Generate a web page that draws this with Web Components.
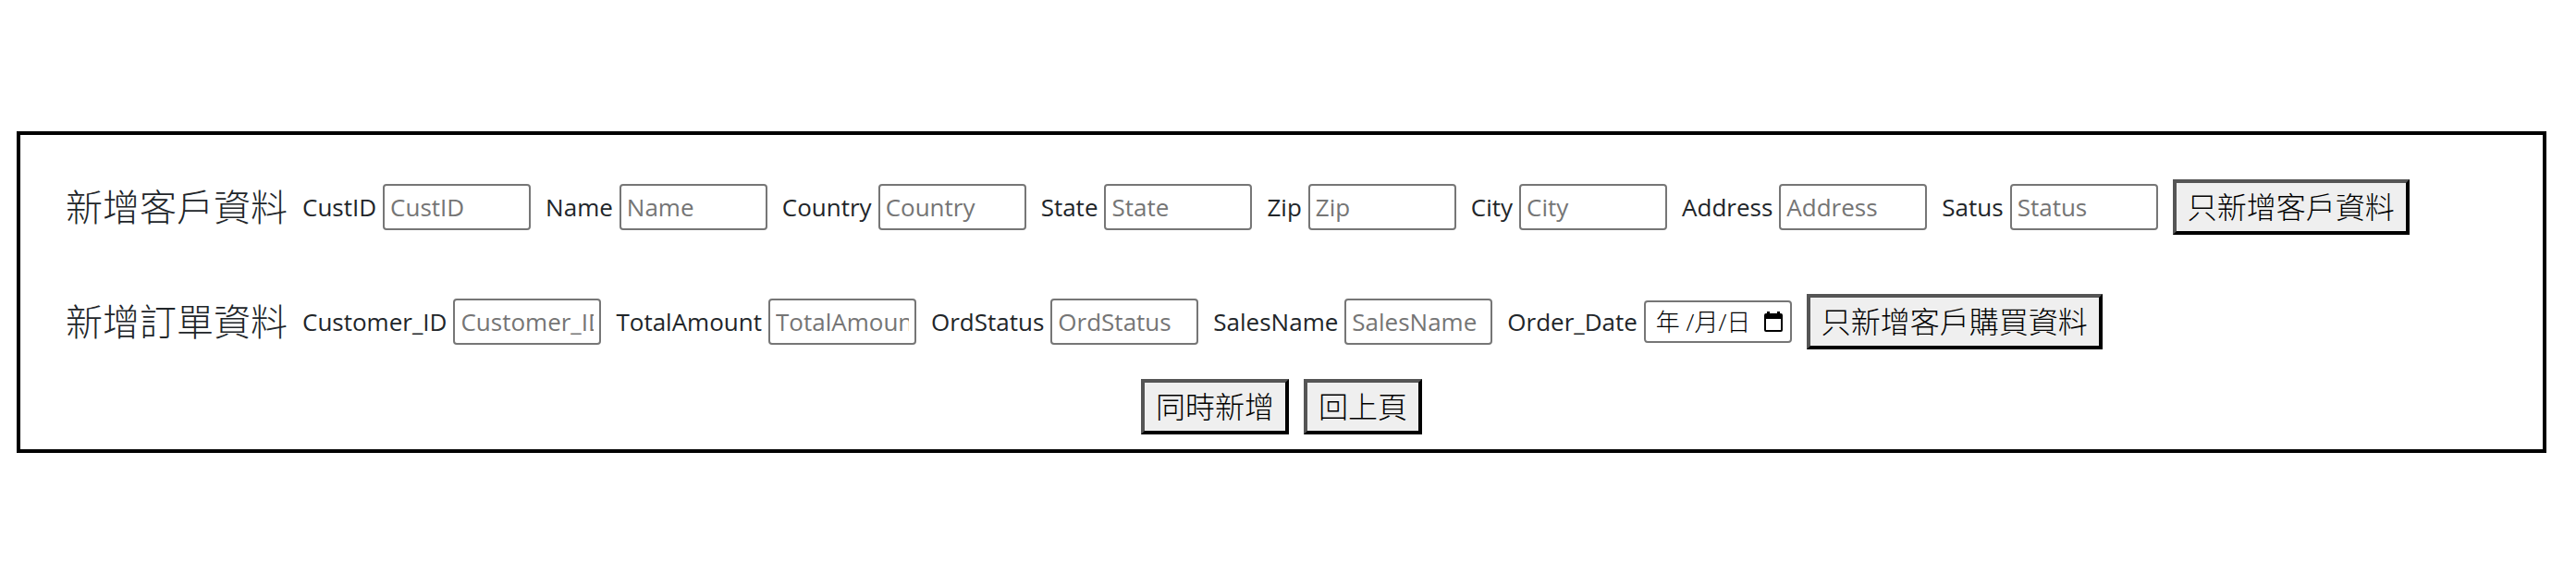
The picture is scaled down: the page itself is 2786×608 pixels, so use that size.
<!DOCTYPE html>
<html lang="zh-Hant">
<head>
<meta charset="utf-8">
<meta name="viewport" content="width=device-width, initial-scale=1">
<title>新增資料</title>
<style>
  body {
    margin: 142px 32px 64px 18px;
    background: #fff;
    color: #212529;
    font: 26px/40px "Open Sans", "Noto Sans CJK TC", sans-serif;
  }
</style>
</head>
<body>
<entry-panel>
  <form-row heading="新增客戶資料">
    <text-field label="CustID"></text-field>
    <text-field label="Name"></text-field>
    <text-field label="Country"></text-field>
    <text-field label="State"></text-field>
    <text-field label="Zip"></text-field>
    <text-field label="City"></text-field>
    <text-field label="Address"></text-field>
    <text-field label="Satus" hint="Status"></text-field>
    <action-button>只新增客戶資料</action-button>
  </form-row>
  <form-row heading="新增訂單資料">
    <text-field label="Customer_ID"></text-field>
    <text-field label="TotalAmount"></text-field>
    <text-field label="OrdStatus"></text-field>
    <text-field label="SalesName"></text-field>
    <date-field label="Order_Date"></date-field>
    <action-button>只新增客戶購買資料</action-button>
  </form-row>
  <action-button slot="actions">同時新增</action-button>
  <action-button slot="actions">回上頁</action-button>
</entry-panel>

<script>
  const define = (name, render, setup) => {
    customElements.define(name, class extends HTMLElement {
      constructor() {
        super();
        this.attachShadow({ mode: "open" });
      }
      connectedCallback() {
        this.shadowRoot.innerHTML = render(this);
        if (setup) setup(this);
      }
    });
  };

  const fieldStyle = `
    :host { display: flex; align-items: center; gap: 7px; }
    label { white-space: nowrap; }
    input {
      box-sizing: border-box;
      width: 160px;
      height: 50px;
      margin: 0;
      padding: 2px 6px;
      border: 2px solid #767676;
      border-radius: 4px;
      background: #fff;
      color: #000;
      font: inherit;
    }
    input::placeholder { color: #757575; }
  `;

  define("entry-panel", () => `
    <style>
      :host { display: block; border: 4px solid #000; padding: 48px 0 16px; }
      form { display: flex; flex-direction: column; gap: 32px; }
      .rows { display: flex; flex-direction: column; gap: 64px; padding: 0 16px 0 49px; }
      .actions { display: flex; flex-wrap: wrap; justify-content: center; gap: 16px; }
    </style>
    <form>
      <div class="rows"><slot></slot></div>
      <div class="actions"><slot name="actions"></slot></div>
    </form>`);

  define("form-row", el => `
    <style>
      :host { display: flex; flex-wrap: wrap; align-items: center; gap: 16px; }
      h2 { margin: 0; font-size: 40px; line-height: 48px; font-weight: 300; white-space: nowrap; }
    </style>
    <h2>${el.getAttribute("heading")}</h2>
    <slot></slot>`);

  define("text-field", el => {
    const label = el.getAttribute("label");
    return `
    <style>${fieldStyle}</style>
    <label for="field">${label}</label>
    <input id="field" type="text" placeholder="${el.getAttribute("hint") || label}">`;
  });

  define("date-field", el => `
    <style>
      ${fieldStyle}
      .box { display: grid; align-items: center; }
      .box > * { grid-area: 1 / 1; }
      input { height: 46px; }
      input::-webkit-datetime-edit { opacity: 0; }
      input::-webkit-calendar-picker-indicator { opacity: 0; }
      .face {
        display: flex;
        align-items: center;
        justify-content: space-between;
        padding: 0 10px 0 13px;
        color: #000;
        font-size: 26px;
        font-weight: 300;
        pointer-events: none;
      }
      .filled .mask { visibility: hidden; }
      .filled input::-webkit-datetime-edit { opacity: 1; }
      svg { width: 20px; height: 22px; }
    </style>
    <label for="field">${el.getAttribute("label")}</label>
    <div class="box">
      <input id="field" type="date">
      <div class="face">
        <span class="mask">年 /月/日</span>
        <svg viewBox="0 0 20 22" aria-hidden="true">
          <path fill-rule="evenodd" d="M3 0h3v2h8V0h3v2h1a2 2 0 0 1 2 2v16a2 2 0 0 1-2 2H2a2 2 0 0 1-2-2V4a2 2 0 0 1 2-2h1zM2 8v12h16V8z"/>
        </svg>
      </div>
    </div>`, el => {
    const box = el.shadowRoot.querySelector(".box");
    const input = el.shadowRoot.querySelector("input");
    input.addEventListener("input", () => box.classList.toggle("filled", Boolean(input.value)));
  });

  define("action-button", () => `
    <style>
      :host { display: block; }
      button {
        display: block;
        box-sizing: border-box;
        height: 60px;
        margin: 0;
        padding: 0 12px 4px;
        border: 4px solid;
        border-color: #555 #000 #000 #555;
        border-radius: 0;
        background: #efefef;
        color: #000;
        font: 300 32px/48px "Noto Sans CJK TC", sans-serif;
        white-space: nowrap;
      }
    </style>
    <button type="button"><slot></slot></button>`);
</script>
</body>
</html>
